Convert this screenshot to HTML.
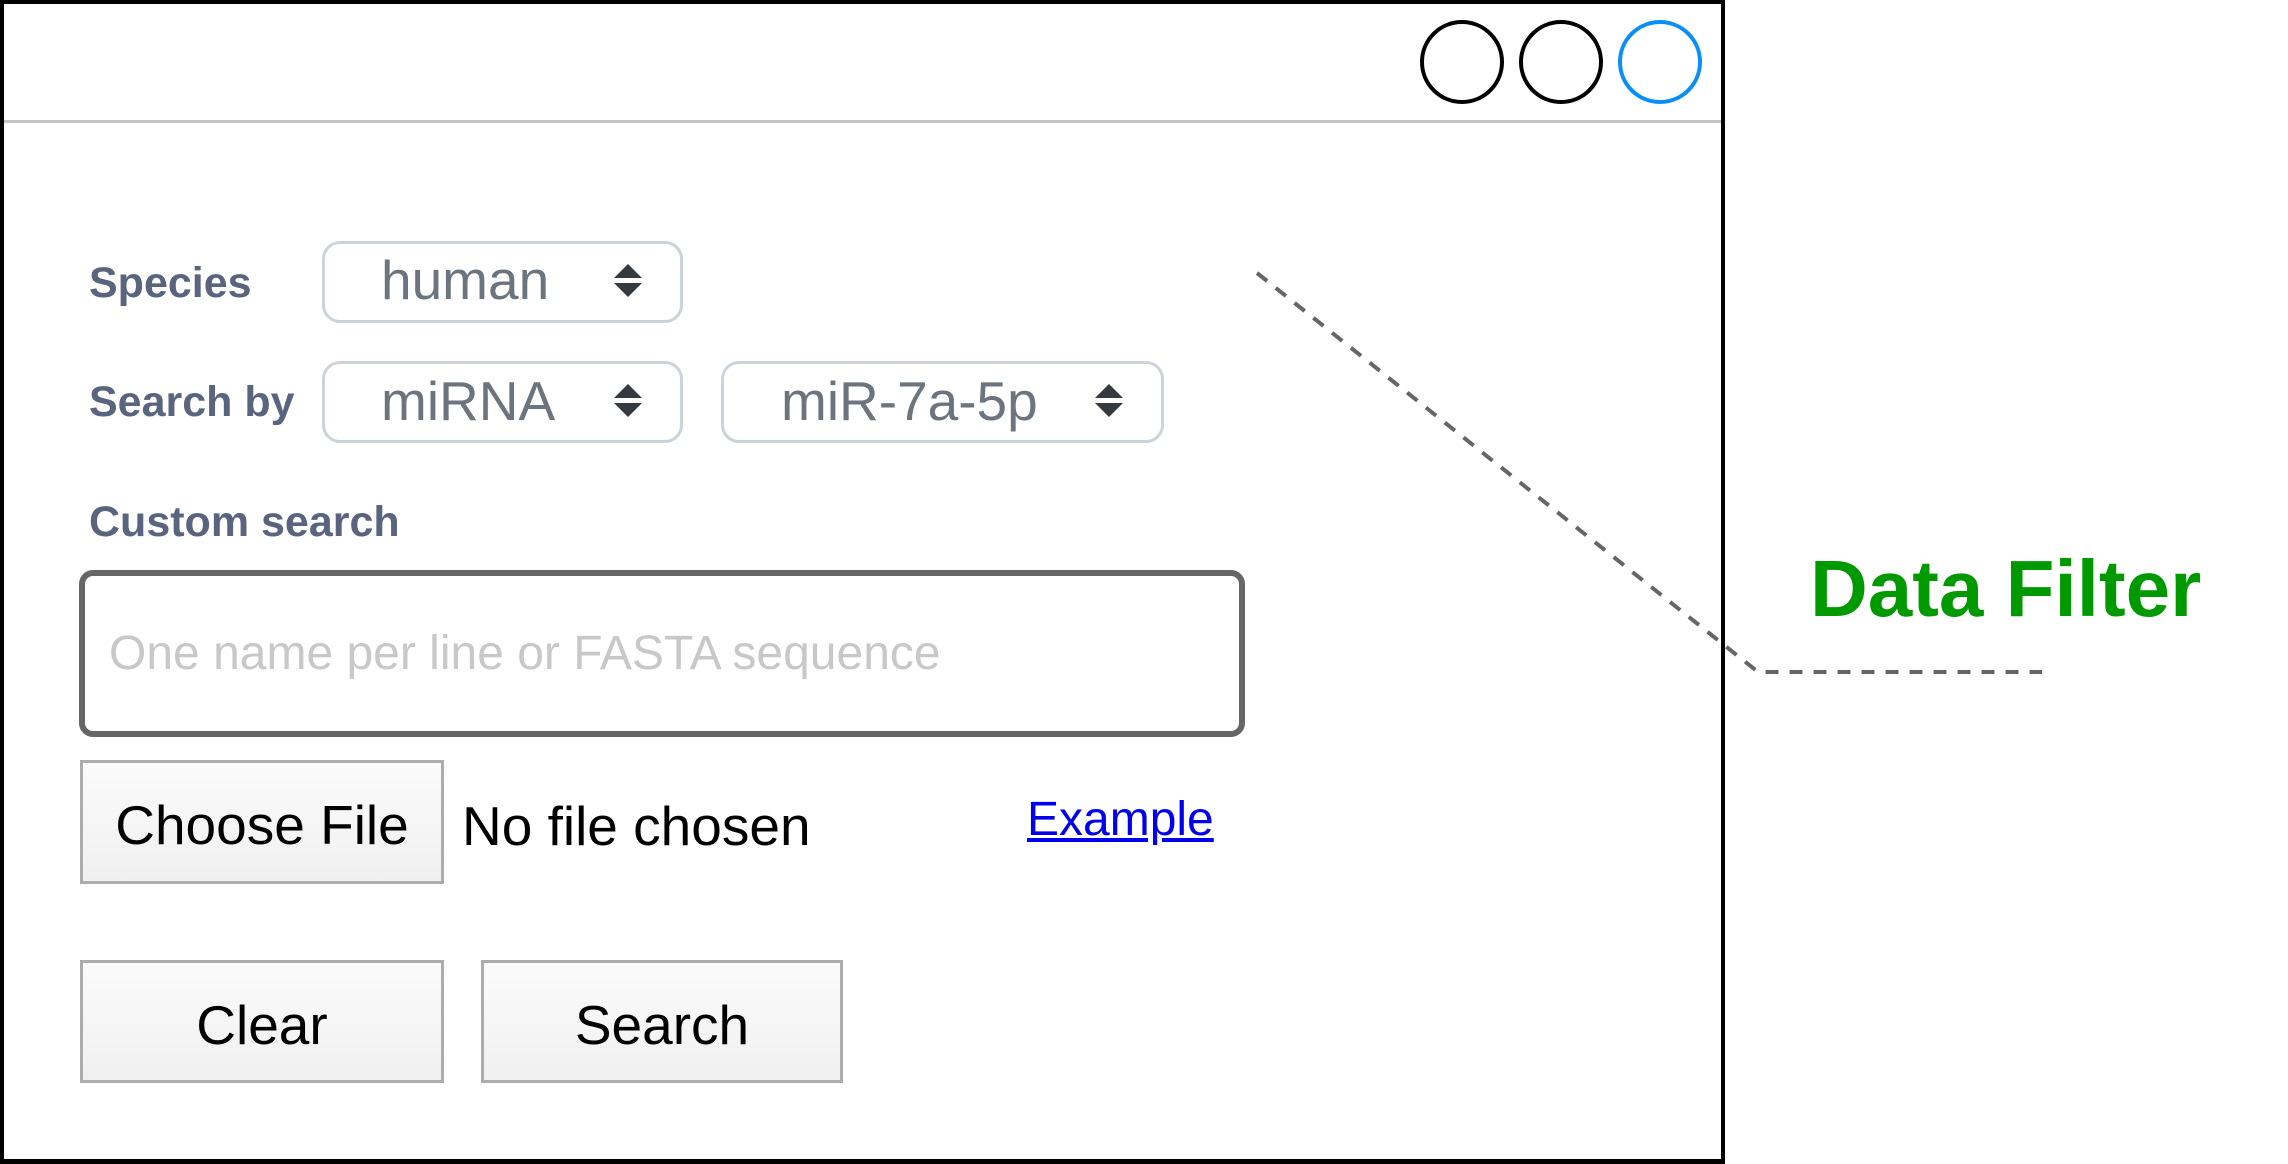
<!DOCTYPE html>
<html><head><meta charset="utf-8"><style>
*{margin:0;padding:0;box-sizing:border-box}
body{width:2288px;height:1164px;background:#fff;position:relative;overflow:hidden;font-family:"Liberation Sans",Arial,sans-serif}
.a{position:absolute;white-space:nowrap}
.win{left:0;top:0;width:1725px;height:1164px;border:4px solid #000;border-bottom-width:5px}
.hl{left:4px;top:120px;width:1717px;height:3px;background:#c4c4c4}
.c{width:84px;height:84px;border:4px solid #000;border-radius:50%;top:20px}
.lab{font-weight:bold;color:#59657e;font-size:43px;line-height:1}
.sel{border:3px solid #ccd3da;border-radius:18px;height:82px;background:#fff}
.st{font-size:55px;color:#6c757d;line-height:1}
.btn{border:3px solid #acacac;background:linear-gradient(#fbfbfb,#f0f0f0);font-size:55px;color:#000;text-align:center}
</style></head><body>
<div class="a win"></div>
<div class="a hl"></div>
<div class="a c" style="left:1420px"></div>
<div class="a c" style="left:1519px"></div>
<div class="a c" style="left:1618px;border-color:#0a8ff8"></div>

<div class="a lab" style="left:89px;top:262px">Species</div>
<div class="a sel" style="left:322px;top:241px;width:361px"></div>
<div class="a st" style="left:381px;top:253px">human</div>

<div class="a lab" style="left:89px;top:381px">Search by</div>
<div class="a sel" style="left:322px;top:361px;width:361px"></div>
<div class="a st" style="left:381px;top:374px">miRNA</div>
<div class="a sel" style="left:721px;top:361px;width:443px"></div>
<div class="a st" style="left:781px;top:374px">miR-7a-5p</div>

<svg class="a" style="left:0;top:0" width="2288" height="1164">
<g fill="#343a40">
<path d="M614 278 L628 264 L642 278Z M614 283 L642 283 L628 297Z"/>
<path d="M614 398 L628 384 L642 398Z M614 403 L642 403 L628 417Z"/>
<path d="M1095 398 L1109 384 L1123 398Z M1095 403 L1123 403 L1109 417Z"/>
</g>
<path d="M1257 273 L1758 672 L2042 672" fill="none" stroke="#666" stroke-width="4" stroke-dasharray="13 11"/>
</svg>

<div class="a lab" style="left:89px;top:501px">Custom search</div>
<div class="a" style="left:79px;top:570px;width:1166px;height:167px;border:6px solid #666;border-radius:14px"></div>
<div class="a" style="left:109px;top:626px;font-size:48px;color:#c8c8c8">One name per line or FASTA sequence</div>

<div class="a btn" style="left:80px;top:760px;width:364px;height:124px;line-height:124px">Choose File</div>
<div class="a" style="left:462px;top:794px;font-size:55px;color:#000">No file chosen</div>
<div class="a" style="left:1027px;top:792px;font-size:48px;color:#0000ee;text-decoration:underline">Example</div>

<div class="a btn" style="left:80px;top:960px;width:364px;height:123px;line-height:124px">Clear</div>
<div class="a btn" style="left:481px;top:960px;width:362px;height:123px;line-height:124px">Search</div>

<div class="a" style="left:1810px;top:549px;font-size:80px;font-weight:bold;color:#009900;line-height:1">Data Filter</div>
</body></html>
